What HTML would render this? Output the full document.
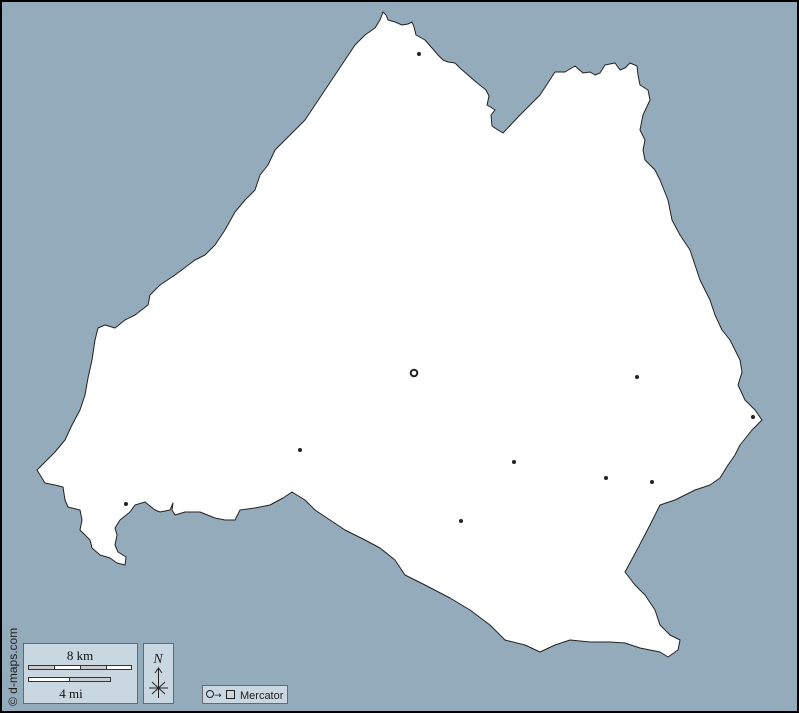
<!DOCTYPE html>
<html><head><meta charset="utf-8"><style>
html,body{margin:0;padding:0;}
body{width:799px;height:713px;overflow:hidden;background:#94abbb;}
svg{display:block;}
</style></head><body>
<svg width="799" height="713" viewBox="0 0 799 713" xmlns="http://www.w3.org/2000/svg">
<rect x="0" y="0" width="799" height="713" fill="#94abbb"/>
<path fill="#fff" stroke="#222" stroke-width="1" stroke-linejoin="round" d="M383,12 L386,15 388,20 395,22 402,25 408,24 412,22 414,27 416,35 425,40 432,48 438,55 443,60 448,62 455,63 460,68 468,75 476,82 486,90 489,96 487,105 492,108 495,110 491,115 492,126 498,130 503,133 520,115 540,95 555,72 565,72 575,66 583,73 590,72 595,75 600,73 605,65 615,63 620,70 625,68 630,63 637,66 638,75 640,85 648,90 650,100 643,115 640,130 645,140 643,150 645,160 655,170 660,180 668,200 672,220 680,235 690,250 695,265 700,280 710,300 715,315 722,330 730,340 735,350 740,360 742,372 738,385 745,400 755,410 762,420 752,430 740,445 735,455 728,465 720,478 710,485 695,490 675,500 660,505 650,525 638,548 625,572 635,585 645,595 655,610 660,625 670,635 680,640 678,650 668,657 660,652 640,648 625,643 610,642 590,642 570,640 555,645 540,652 525,645 505,640 490,625 470,610 450,598 425,585 405,575 395,560 380,548 365,540 345,530 330,520 315,510 305,500 292,492 283,498 270,505 255,508 240,510 235,520 225,520 215,518 200,512 185,512 175,515 172,510 173,503 170,510 160,512 155,510 145,502 135,505 130,512 120,520 115,528 117,535 115,545 118,552 126,557 125,565 117,563 110,558 100,555 92,548 90,540 80,530 82,520 80,510 68,507 65,500 63,487 55,485 45,483 37,470 45,462 55,452 65,440 72,425 80,410 85,395 88,378 92,360 95,340 98,328 105,325 115,328 125,320 135,315 148,305 150,295 160,285 175,275 195,260 205,255 215,245 225,230 235,212 245,200 255,190 260,175 268,165 275,150 285,140 295,130 305,120 315,105 325,90 335,75 345,60 355,45 365,35 375,28 380,20 Z"/>
<g fill="#222">
<circle cx="419" cy="54" r="2"/><circle cx="637" cy="377" r="2"/><circle cx="753" cy="417" r="2"/>
<circle cx="300" cy="450" r="2"/><circle cx="514" cy="462" r="2"/><circle cx="606" cy="478" r="2"/>
<circle cx="652" cy="482" r="2"/><circle cx="126" cy="504" r="2"/><circle cx="461" cy="521" r="2"/>
</g>
<circle cx="414" cy="373" r="3.3" fill="none" stroke="#222" stroke-width="2"/>
<rect x="23.5" y="643.5" width="114" height="60" fill="#c8d7e0" stroke="#667" stroke-width="1"/>
<text x="80" y="660" font-family="Liberation Serif" font-size="13" text-anchor="middle" fill="#111">8 km</text>
<rect x="28.5" y="665.5" width="103" height="4" fill="#fff" stroke="#333" stroke-width="1"/>
<rect x="28.5" y="665.5" width="26" height="4" fill="#ccc" stroke="#333" stroke-width="1"/>
<rect x="80.5" y="665.5" width="26" height="4" fill="#ccc" stroke="#333" stroke-width="1"/>
<rect x="28.5" y="677.5" width="41" height="4" fill="#fff" stroke="#333" stroke-width="1"/>
<rect x="69.5" y="677.5" width="41" height="4" fill="#ccc" stroke="#333" stroke-width="1"/>
<text x="71" y="698" font-family="Liberation Serif" font-size="13" text-anchor="middle" fill="#111">4 mi</text>
<rect x="143.5" y="643.5" width="30" height="60" fill="#c8d7e0" stroke="#667" stroke-width="1"/>
<text x="158" y="663" font-family="Liberation Serif" font-style="italic" font-size="14" text-anchor="middle" fill="#222">N</text>
<path d="M158.5,668 V698 M155,673 L158.5,668 L162,673 M149,688 H168 M152,682 L165,694 M165,682 L152,694" stroke="#222" stroke-width="1" fill="none"/>
<rect x="202.5" y="685.5" width="85" height="18" fill="#c8d7e0" stroke="#667" stroke-width="1"/>
<circle cx="210" cy="694" r="3.5" fill="none" stroke="#222" stroke-width="1"/>
<text x="214" y="698" font-family="DejaVu Sans" font-size="9" fill="#222">→</text>
<rect x="226.5" y="690.5" width="8" height="8" fill="none" stroke="#222" stroke-width="1"/>
<text x="240" y="699" font-family="Liberation Sans" font-size="11" fill="#222">Mercator</text>
<text transform="translate(17,706) rotate(-90)" font-family="Liberation Sans" font-size="12" fill="#222">© d-maps.com</text>
<rect x="1" y="1" width="797" height="711" fill="none" stroke="#000" stroke-width="2"/>
</svg>
</body></html>
